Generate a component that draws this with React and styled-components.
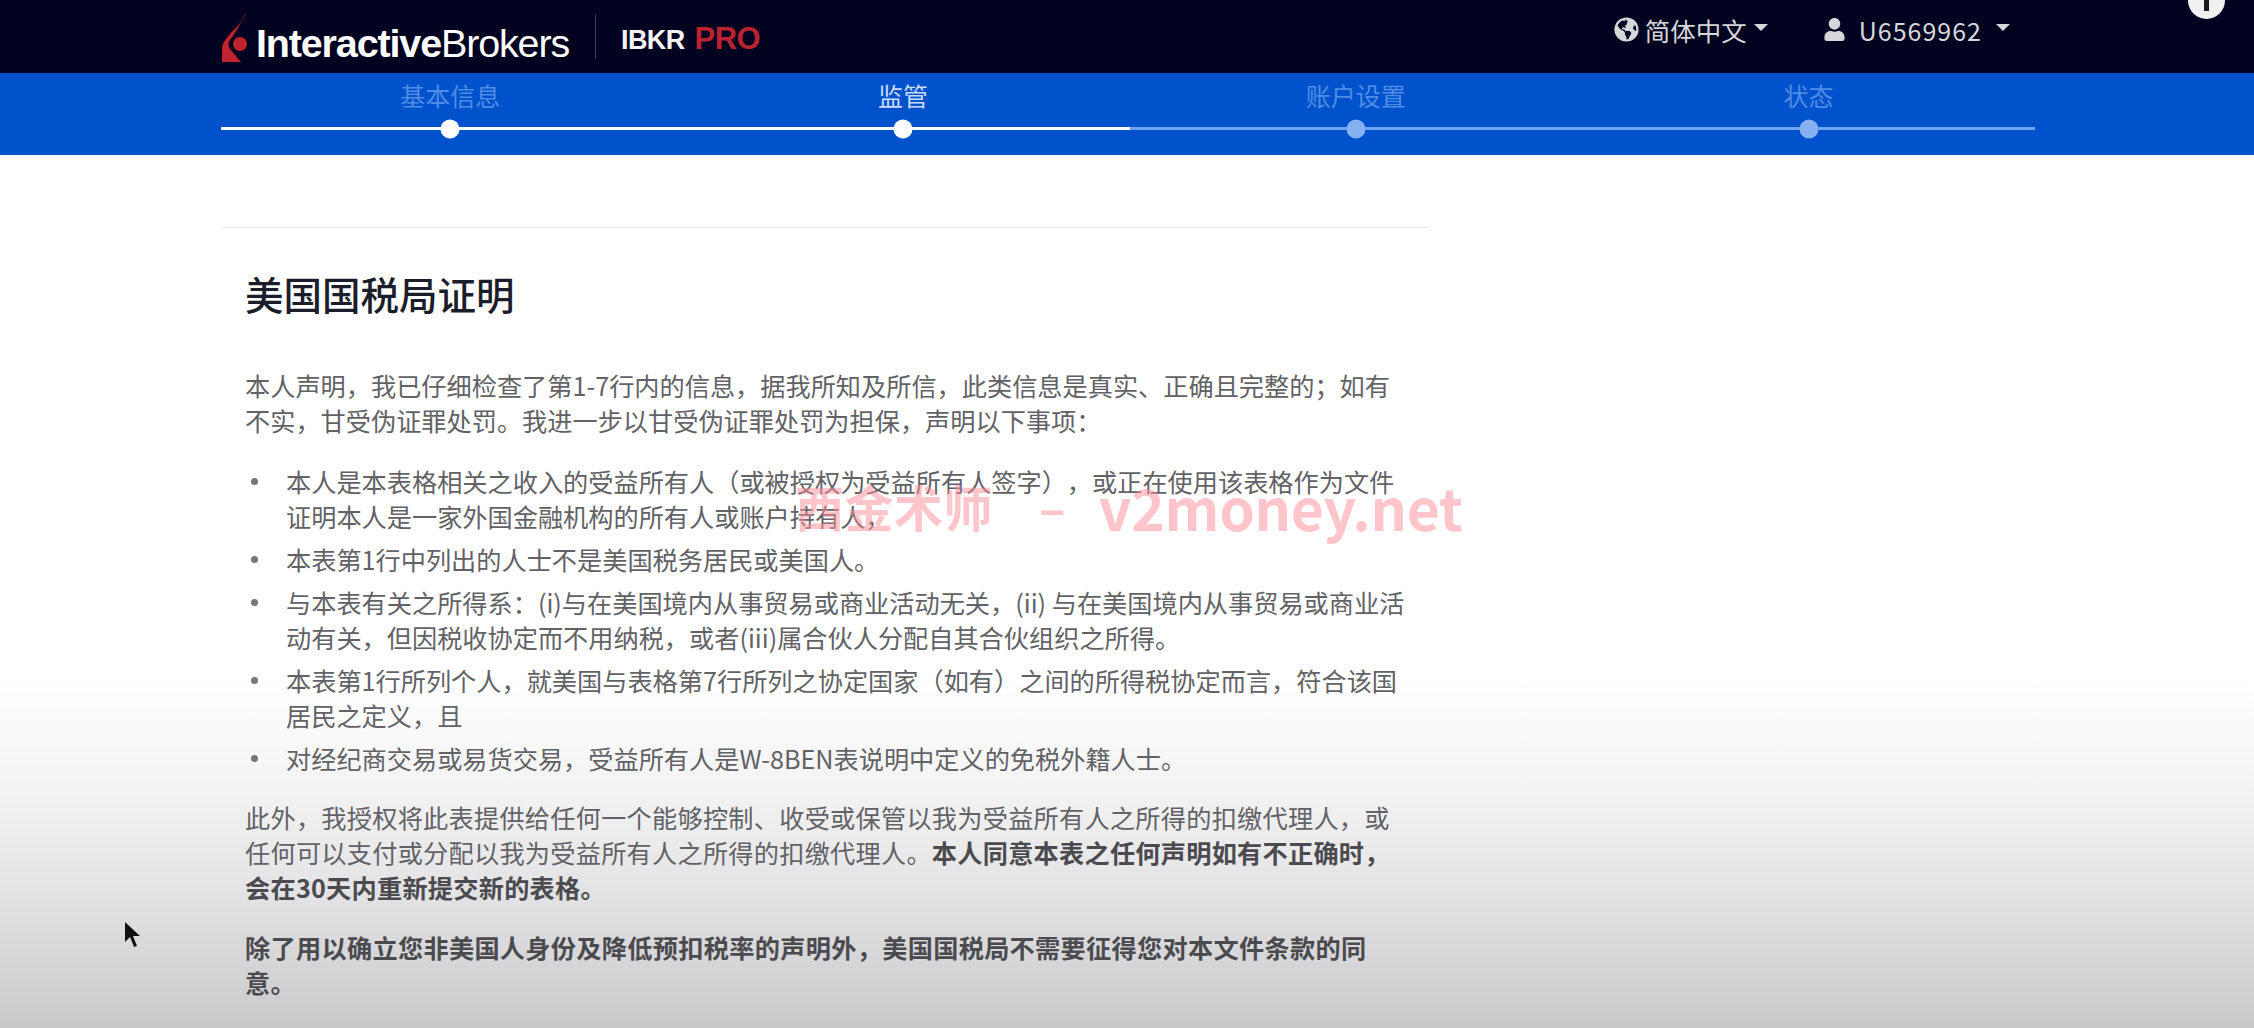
import styled, { createGlobalStyle } from 'styled-components';
import { FaGlobeAmericas, FaUser } from 'react-icons/fa';

const GlobalStyle = createGlobalStyle`
  html, body {
    margin: 0;
    height: 100%;
    overflow: hidden;
  }
  body {
    font-family: "Noto Sans CJK SC", "Noto Sans", sans-serif;
    background: #fff;
    text-spacing-trim: space-all;
  }
`;

const Page = styled.div`
  position: relative;
  width: 2254px;
  height: 1028px;
  overflow: hidden;
  background: linear-gradient(180deg, #fff 0, #fff 680px, #f3f3f4 790px, #e2e2e4 900px, #c9c9cc 1028px);
`;

const TopBar = styled.header`
  height: 73px;
  box-sizing: border-box;
  padding: 0 244px 0 221px;
  display: flex;
  align-items: center;
  justify-content: space-between;
  background: #01021f;
`;

const Brand = styled.div`
  display: flex;
  align-items: center;
  height: 100%;
`;

const BrandName = styled.div`
  margin: 13px 0 0 6px;
  width: 316px;
  font-family: "Liberation Sans", Arial, sans-serif;
  font-size: 39.5px;
  letter-spacing: -1.15px;
  white-space: nowrap;
  color: #fff;

  b {
    font-weight: 700;
  }
`;

const BrandDivider = styled.div`
  width: 1px;
  height: 44px;
  margin: 0 25px 0 23px;
  background: #3c3e55;
`;

const ProName = styled.div`
  margin-top: 4px;
  font-family: "Liberation Sans", Arial, sans-serif;
  font-size: 27px;
  font-weight: 700;
  letter-spacing: -0.6px;
  white-space: nowrap;
  color: #f4f4f6;

  span {
    margin-left: 10px;
    font-size: 31px;
    color: #b8232f;
  }
`;

const UserMenu = styled.nav`
  display: flex;
  align-items: center;
  margin-top: -14px;
`;

const MenuItem = styled.div`
  display: flex;
  align-items: center;
  margin-left: ${({ $gap }) => $gap || 0}px;
  font-size: ${({ $size }) => $size}px;
  letter-spacing: ${({ $spacing }) => $spacing || 0}px;
  color: #d5d7da;
  white-space: nowrap;

  svg {
    flex: none;
    margin-right: ${({ $iconGap }) => $iconGap}px;
  }
`;

const Caret = styled.i`
  width: 0;
  height: 0;
  margin-left: ${({ $gap }) => $gap}px;
  margin-top: -5px;
  border-left: 7px solid transparent;
  border-right: 7px solid transparent;
  border-top: 7px solid #d5d7da;
`;

const InfoBadge = styled.div`
  position: absolute;
  top: -18px;
  left: 2188px;
  width: 37px;
  height: 37px;
  border-radius: 50%;
  background: #f1f1f1;

  &::after {
    content: "";
    position: absolute;
    left: 16px;
    top: 18px;
    width: 5px;
    height: 11px;
    background: #1c1c1c;
  }
`;

const StepBar = styled.div`
  height: 82px;
  box-sizing: border-box;
  padding: 0 219px 0 224px;
  display: flex;
  background: #0052cc;
`;

const Step = styled.div`
  flex: 1;
  display: flex;
  flex-direction: column;
  align-items: center;

  &:first-child > div:last-child::before {
    content: "";
    position: absolute;
    left: -3px;
    top: 0;
    width: 3px;
    height: 3px;
    background: #fff;
  }
`;

const StepLabel = styled.div`
  height: 44px;
  font-size: 25px;
  line-height: 44px;
  color: ${({ $current }) => ($current ? '#c6dafa' : '#4f8ce6')};
`;

const StepTrack = styled.div`
  position: relative;
  width: 100%;
  height: 3px;
  margin-top: 10px;
  background: ${({ $done }) => ($done ? '#fff' : '#6ea4f0')};

  &::after {
    content: "";
    position: absolute;
    left: 50%;
    top: 50%;
    width: 19px;
    height: 19px;
    border-radius: 50%;
    transform: translate(-50%, -50%);
    background: ${({ $done }) => ($done ? '#fff' : '#85b1f1')};
  }
`;

const Content = styled.main`
  width: 1208px;
  margin-left: 221px;
  padding-top: 72px;
`;

const Rule = styled.hr`
  height: 1px;
  margin: 0;
  border: 0;
  background: #e9e9ec;
`;

const Section = styled.section`
  padding: 0 0 0 24px;
`;

const Title = styled.h2`
  margin: 38px 0 48px;
  font-size: 38.5px;
  line-height: 54px;
  font-weight: 500;
  color: #1b1e2a;
`;

const Para = styled.p`
  margin: 0 0 ${({ $after }) => $after || 0}px;
  font-size: 25.2px;
  line-height: 35px;
  letter-spacing: ${({ $spacing }) => $spacing || 0}px;
  white-space: nowrap;
  color: #626266;

  strong {
    font-weight: 700;
    color: #4b4b4f;
  }
`;

const Bullets = styled.ul`
  margin: 0 0 24px;
  padding: 0 0 0 41px;
  list-style: none;
  font-size: 25.2px;
  line-height: 35px;
  white-space: nowrap;
  color: #626266;
`;

const Bullet = styled.li`
  position: relative;
  margin-bottom: 8px;

  &::before {
    content: "";
    position: absolute;
    left: -35px;
    top: 14px;
    width: 7px;
    height: 7px;
    border-radius: 50%;
    background: #77777b;
  }
`;

const Watermark = styled.div`
  position: absolute;
  left: 795px;
  top: 464px;
  display: flex;
  align-items: center;
  font-family: "Noto Sans CJK SC", sans-serif;
  font-weight: 700;
  line-height: 84px;
  white-space: nowrap;
  color: #ff8d96;
  opacity: 0.5;
`;

const WatermarkName = styled.span`
  font-size: 49px;
  letter-spacing: 0.5px;
`;

const WatermarkDash = styled.span`
  margin: 0 33px 0 46px;
  font-size: 49px;
`;

const WatermarkSite = styled.span`
  font-size: 57px;
  letter-spacing: -0.3px;
`;

const Pointer = styled.svg`
  position: absolute;
  left: 124px;
  top: 921px;
`;

const steps = [
  { label: '基本信息', done: true },
  { label: '监管', done: true, current: true },
  { label: '账户设置' },
  { label: '状态' },
];

const App = () => (
  <Page>
    <GlobalStyle />
    <TopBar>
      <Brand>
        <svg width="29" height="50" viewBox="0 0 29 50">
          <path
            d="M25 0C24 9 12 17 5 27C2 31 1 34 1 37V50H20L9 37C7 34 7 31 9 28C12 24 19 14 25 0Z"
            fill="#c0222e"
          />
          <circle cx="19" cy="32" r="7" fill="#c0222e" />
        </svg>
        <BrandName>
          <b>Interactive</b>Brokers
        </BrandName>
        <BrandDivider />
        <ProName>
          IBKR<span>PRO</span>
        </ProName>
      </Brand>
      <UserMenu>
        <MenuItem $size={25.5} $iconGap={6}>
          <FaGlobeAmericas size={25} />
          简体中文
          <Caret $gap={7} />
        </MenuItem>
        <MenuItem $gap={55} $size={25} $spacing={1} $iconGap={13}>
          <FaUser size={23} />
          U6569962
          <Caret $gap={14} />
        </MenuItem>
      </UserMenu>
    </TopBar>
    <InfoBadge />
    <StepBar>
      {steps.map((step) => (
        <Step key={step.label}>
          <StepLabel $current={step.current}>{step.label}</StepLabel>
          <StepTrack $done={step.done} />
        </Step>
      ))}
    </StepBar>
    <Content>
      <Rule />
      <Section>
        <Title>美国国税局证明</Title>
        <Para $after={26}>
          本人声明，我已仔细检查了第1-7行内的信息，据我所知及所信，此类信息是真实、正确且完整的；如有
          <br />
          不实，甘受伪证罪处罚。我进一步以甘受伪证罪处罚为担保，声明以下事项：
        </Para>
        <Bullets>
          <Bullet>
            本人是本表格相关之收入的受益所有人（或被授权为受益所有人签字），或正在使用该表格作为文件
            <br />
            证明本人是一家外国金融机构的所有人或账户持有人，
          </Bullet>
          <Bullet>本表第1行中列出的人士不是美国税务居民或美国人。</Bullet>
          <Bullet>
            与本表有关之所得系：(i)与在美国境内从事贸易或商业活动无关，(ii) 与在美国境内从事贸易或商业活
            <br />
            动有关，但因税收协定而不用纳税，或者(iii)属合伙人分配自其合伙组织之所得。
          </Bullet>
          <Bullet>
            本表第1行所列个人，就美国与表格第7行所列之协定国家（如有）之间的所得税协定而言，符合该国
            <br />
            居民之定义，且
          </Bullet>
          <Bullet>对经纪商交易或易货交易，受益所有人是W-8BEN表说明中定义的免税外籍人士。</Bullet>
        </Bullets>
        <Para $after={25} $spacing={0.25}>
          此外，我授权将此表提供给任何一个能够控制、收受或保管以我为受益所有人之所得的扣缴代理人，或
          <br />
          任何可以支付或分配以我为受益所有人之所得的扣缴代理人。<strong>本人同意本表之任何声明如有不正确时，</strong>
          <br />
          <strong>会在30天内重新提交新的表格。</strong>
        </Para>
        <Para $spacing={0.3}>
          <strong>
            除了用以确立您非美国人身份及降低预扣税率的声明外，美国国税局不需要征得您对本文件条款的同
            <br />
            意。
          </strong>
        </Para>
      </Section>
    </Content>
    <Watermark>
      <WatermarkName>西金术师</WatermarkName>
      <WatermarkDash>–</WatermarkDash>
      <WatermarkSite>v2money.net</WatermarkSite>
    </Watermark>
    <Pointer width="17" height="27" viewBox="0 0 17 27">
      <path d="M1 1L1 21L6 16L10 26L13 25L9 15L16 15Z" fill="#111" />
    </Pointer>
  </Page>
);

export default App;
